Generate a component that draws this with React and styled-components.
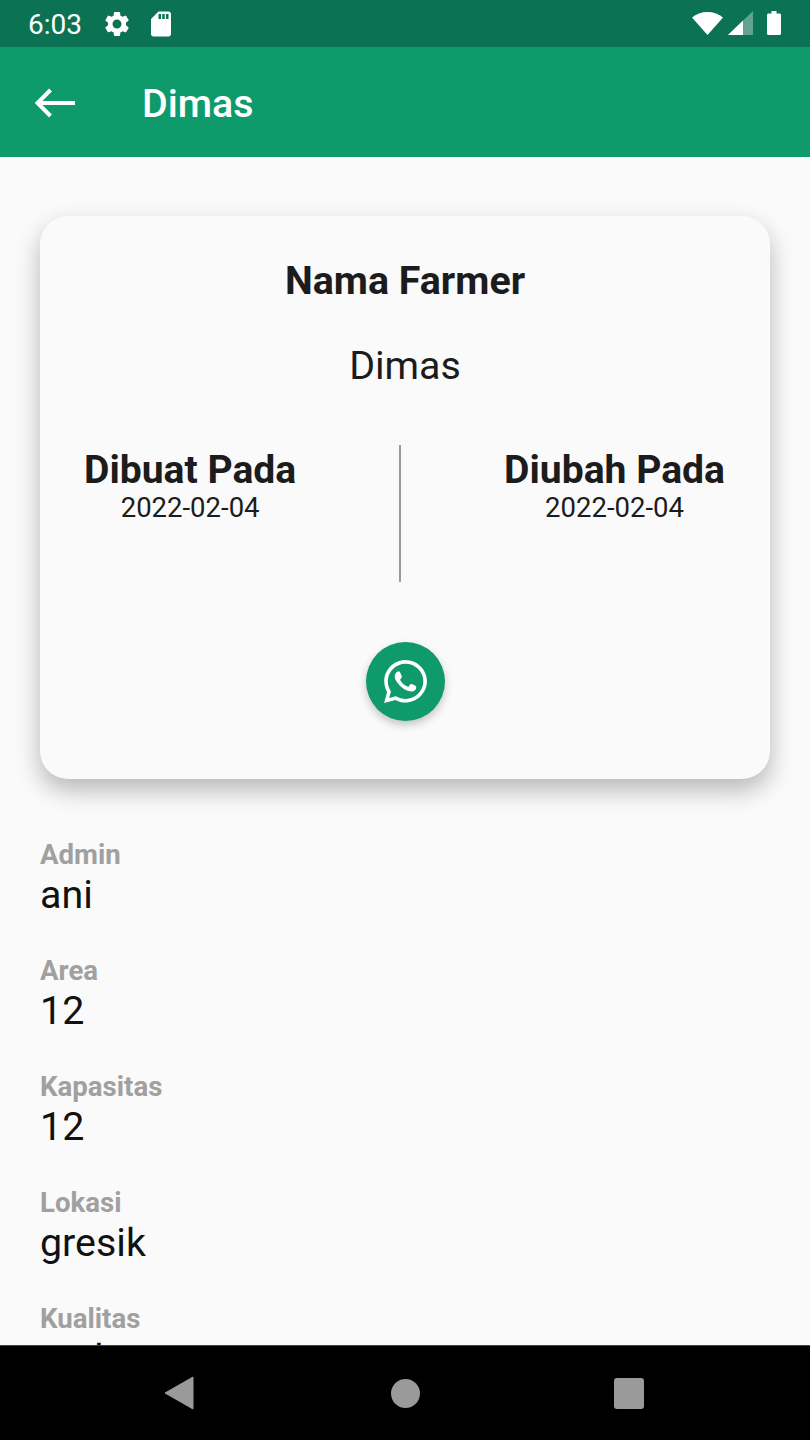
import styled, { createGlobalStyle } from 'styled-components';
import { MdSettings, MdSdStorage } from 'react-icons/md';
import { FaWhatsapp } from 'react-icons/fa';

const GlobalStyle = createGlobalStyle`
  html, body {
    margin: 0;
    padding: 0;
    background: #fafafa;
  }
  * {
    box-sizing: border-box;
  }
`;

const details = [
  { label: 'Admin', value: 'ani' },
  { label: 'Area', value: '12' },
  { label: 'Kapasitas', value: '12' },
  { label: 'Lokasi', value: 'gresik' },
  { label: 'Kualitas', value: 'sedang' },
];

const App = () => {
  return (
    <Screen>
      <GlobalStyle />
      <StatusBar>
        <StatusLeft>
          <Clock>6:03</Clock>
          <MdSettings size={30} />
          <MdSdStorage size={30} />
        </StatusLeft>
        <StatusRight>
          <svg width="31" height="23" viewBox="0 0 31 23">
            <path d="M0 5.5C4.2 2 9.5 0 15.5 0S26.8 2 31 5.5L15.5 23Z" fill="#fff" />
          </svg>
          <svg width="25" height="24" viewBox="0 0 25 24">
            <path d="M0 24L25 0V24Z" fill="#fff" fillOpacity="0.35" />
            <path d="M0 24L15 9.6V24Z" fill="#fff" />
          </svg>
          <BatteryIcon width="14" height="24" viewBox="0 0 14 24">
            <path d="M1.5 2.5H4.5V0H9.5V2.5H12.5C13.3 2.5 14 3.2 14 4V22.5C14 23.3 13.3 24 12.5 24H1.5C0.7 24 0 23.3 0 22.5V4C0 3.2 0.7 2.5 1.5 2.5Z" fill="#fff" />
          </BatteryIcon>
        </StatusRight>
      </StatusBar>
      <AppBar>
        <BackIcon width="40" height="30" viewBox="0 0 40 30">
          <path d="M2.5 15H40M15.5 2L2.5 15L15.5 28" fill="none" stroke="#fff" strokeWidth="4" />
        </BackIcon>
        <AppTitle>Dimas</AppTitle>
      </AppBar>
      <Content>
        <Card>
          <CardTitle>Nama Farmer</CardTitle>
          <CardName>Dimas</CardName>
          <DateRow>
            <DateBlock>
              <DateLabel>Dibuat Pada</DateLabel>
              <DateValue>2022-02-04</DateValue>
            </DateBlock>
            <Divider />
            <DateBlock>
              <DateLabel>Diubah Pada</DateLabel>
              <DateValue>2022-02-04</DateValue>
            </DateBlock>
          </DateRow>
          <WhatsappButton>
            <FaWhatsapp size={49} />
          </WhatsappButton>
        </Card>
        <DetailList>
          {details.map((item) => (
            <DetailItem key={item.label}>
              <DetailLabel>{item.label}</DetailLabel>
              <DetailValue>{item.value}</DetailValue>
            </DetailItem>
          ))}
        </DetailList>
      </Content>
      <NavBar>
        <svg width="30" height="34" viewBox="0 0 30 34">
          <path d="M29 1V33L1 17Z" fill="#9a9a9a" stroke="#9a9a9a" strokeLinejoin="round" />
        </svg>
        <HomeDot />
        <RecentSquare />
      </NavBar>
    </Screen>
  );
};

export default App;

const Screen = styled.div`
  width: 810px;
  height: 1440px;
  display: flex;
  flex-direction: column;
  overflow: hidden;
  background: #fafafa;
  font-family: Roboto, 'Liberation Sans', sans-serif;
`;

const StatusBar = styled.div`
  height: 47px;
  flex-shrink: 0;
  padding: 0 29px 0 28px;
  display: flex;
  justify-content: space-between;
  align-items: center;
  background: #0b7354;
  color: #fff;
`;

const StatusLeft = styled.div`
  display: flex;
  align-items: center;
  margin-top: 1px;

  svg:last-child {
    margin-left: 14px;
  }
`;

const Clock = styled.span`
  font-size: 28px;
  margin-right: 20px;
`;

const StatusRight = styled.div`
  display: flex;
  align-items: center;
  gap: 5px;
  margin-top: -1px;
`;

const BatteryIcon = styled.svg`
  margin-left: 9px;
`;

const AppBar = styled.div`
  height: 110px;
  flex-shrink: 0;
  padding: 0 35px;
  display: flex;
  align-items: center;
  gap: 67px;
  background: #0f9a6c;
  color: #fff;
`;

const BackIcon = styled.svg`
  margin-top: 2px;
`;

const AppTitle = styled.h1`
  margin: 2px 0 0;
  font-size: 39.4px;
  font-weight: 500;
`;

const Content = styled.div`
  flex: 1;
  min-height: 0;
  overflow: hidden;
  padding: 59px 40px 0;
`;

const Card = styled.div`
  height: 563px;
  padding-top: 43px;
  display: flex;
  flex-direction: column;
  align-items: center;
  background: #fafafa;
  border-radius: 28px;
  box-shadow: 0 11px 24px rgba(0, 0, 0, 0.27);
  color: #1c1c1c;
`;

const CardTitle = styled.div`
  font-size: 39.4px;
  font-weight: 700;
  line-height: 44px;
`;

const CardName = styled.div`
  font-size: 39.4px;
  line-height: 44px;
  margin-top: 41px;
`;

const DateRow = styled.div`
  width: 100%;
  height: 137px;
  margin-top: 57px;
  padding: 0 45px 0 44px;
  display: flex;
  justify-content: space-between;
`;

const DateBlock = styled.div`
  display: flex;
  flex-direction: column;
  align-items: center;
  padding-top: 2px;
`;

const DateLabel = styled.div`
  font-size: 39.1px;
  font-weight: 700;
  line-height: 46px;
`;

const DateValue = styled.div`
  font-size: 27.5px;
  line-height: 29px;
`;

const Divider = styled.div`
  width: 2px;
  height: 137px;
  background: #9a9a9a;
`;

const WhatsappButton = styled.button`
  width: 79px;
  height: 79px;
  margin-top: 60px;
  padding: 0;
  border: none;
  border-radius: 50%;
  display: flex;
  justify-content: center;
  align-items: center;
  background: #0f9a6c;
  color: #fff;
  box-shadow: 0 4px 8px rgba(0, 0, 0, 0.22);
`;

const DetailList = styled.div`
  margin-top: 58px;
  display: flex;
  flex-direction: column;
  gap: 36px;
`;

const DetailItem = styled.div`
  display: flex;
  flex-direction: column;
`;

const DetailLabel = styled.div`
  font-size: 27.6px;
  font-weight: 700;
  line-height: 36px;
  color: #a0a0a0;
`;

const DetailValue = styled.div`
  font-size: 39.4px;
  line-height: 44px;
  color: #111;
`;

const NavBar = styled.div`
  height: 95px;
  flex-shrink: 0;
  display: grid;
  grid-template-columns: repeat(3, 225px);
  justify-content: center;
  align-items: center;
  justify-items: center;
  background: #000;
  border-top: 1px solid #444;

  svg {
    margin-right: 3px;
  }
`;

const HomeDot = styled.div`
  width: 29px;
  height: 29px;
  border-radius: 50%;
  background: #9a9a9a;
`;

const RecentSquare = styled.div`
  width: 30px;
  height: 31px;
  margin-right: 2px;
  border-radius: 3px;
  background: #9a9a9a;
`;
